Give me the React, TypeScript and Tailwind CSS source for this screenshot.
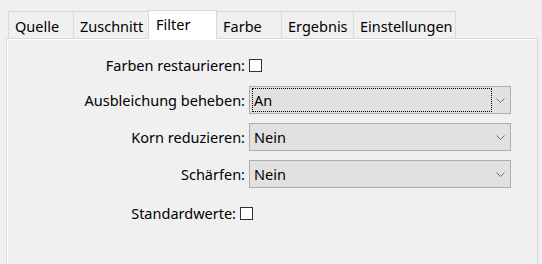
import React from 'react';

const tabs = [
  { label: 'Quelle', w: 'w-[65px]' },
  { label: 'Zuschnitt', w: 'w-[75px]' },
  { label: 'Filter', w: 'w-[69px]', active: true },
  { label: 'Farbe', w: 'w-[64px]' },
  { label: 'Ergebnis', w: 'w-[72px]' },
  { label: 'Einstellungen', w: 'w-[103px]' },
];

function Checkbox() {
  return <div className="w-[13px] h-[13px] border border-[#333333] bg-white" />;
}

function Combo({ value, focused }: { value: string; focused?: boolean }) {
  return (
    <div className="relative w-[262px] h-[28px] bg-[#e1e1e1] border border-[#adadad] flex items-center">
      {focused && (
        <div className="absolute left-[2px] top-[1px] w-[240px] h-[24px] border border-dotted border-black" />
      )}
      <span className="pl-[4px] leading-none">{value}</span>
      <svg className="absolute right-[5px] top-[11px]" width="9" height="5" viewBox="0 0 9 5">
        <path d="M0.5 0.5 L4.5 4.5 L8.5 0.5" fill="none" stroke="#707070" strokeWidth="1" />
      </svg>
    </div>
  );
}

function Row({ label, labelW, children }: { label: string; labelW: string; children: React.ReactNode }) {
  return (
    <div className="flex items-center">
      <div className={`${labelW} text-right pr-[4px] leading-[13px] whitespace-nowrap`}>{label}</div>
      {children}
    </div>
  );
}

export default function App() {
  return (
    <div
      className="w-[542px] h-[264px] bg-[#f0f0f0] text-black text-[14.5px] overflow-hidden"
      style={{ fontFamily: '"Noto Sans", sans-serif' }}
    >
      {/* Tab strip */}
      <div className="flex items-end pl-[8px] h-[39px] relative z-10">
        {tabs.map((t, i) =>
          t.active ? (
            <div
              key={t.label}
              className={`${t.w} h-[29px] bg-white border border-b-0 border-[#d9d9d9] pl-[7px] pt-[3px] leading-[20px]`}
            >
              {t.label}
            </div>
          ) : (
            <div
              key={t.label}
              className={`${t.w} h-[27px] mb-[1px] border-t border-l border-[#d9d9d9] ${
                i === tabs.length - 1 ? 'border-r' : ''
              } ${tabs[i - 1]?.active ? 'border-l-0' : ''} pl-[6px] pt-[4px] leading-[20px]`}
            >
              {t.label}
            </div>
          )
        )}
      </div>
      {/* Panel */}
      <div className="ml-[6px] w-[532px] h-[240px] -mt-[1px] border border-[#d9d9d9] shadow-[inset_1px_1px_0_#ffffff] pt-[20px]">
        <div className="flex flex-col">
          <Row label="Farben restaurieren:" labelW="w-[242px]">
            <Checkbox />
          </Row>
          <div className="mt-[14px]">
            <Row label="Ausbleichung beheben:" labelW="w-[242px]">
              <Combo value="An" focused />
            </Row>
          </div>
          <div className="mt-[9px]">
            <Row label="Korn reduzieren:" labelW="w-[242px]">
              <Combo value="Nein" />
            </Row>
          </div>
          <div className="mt-[9px]">
            <Row label="Schärfen:" labelW="w-[242px]">
              <Combo value="Nein" />
            </Row>
          </div>
          <div className="mt-[19px]">
            <Row label="Standardwerte:" labelW="w-[233px]">
              <Checkbox />
            </Row>
          </div>
        </div>
      </div>
    </div>
  );
}
